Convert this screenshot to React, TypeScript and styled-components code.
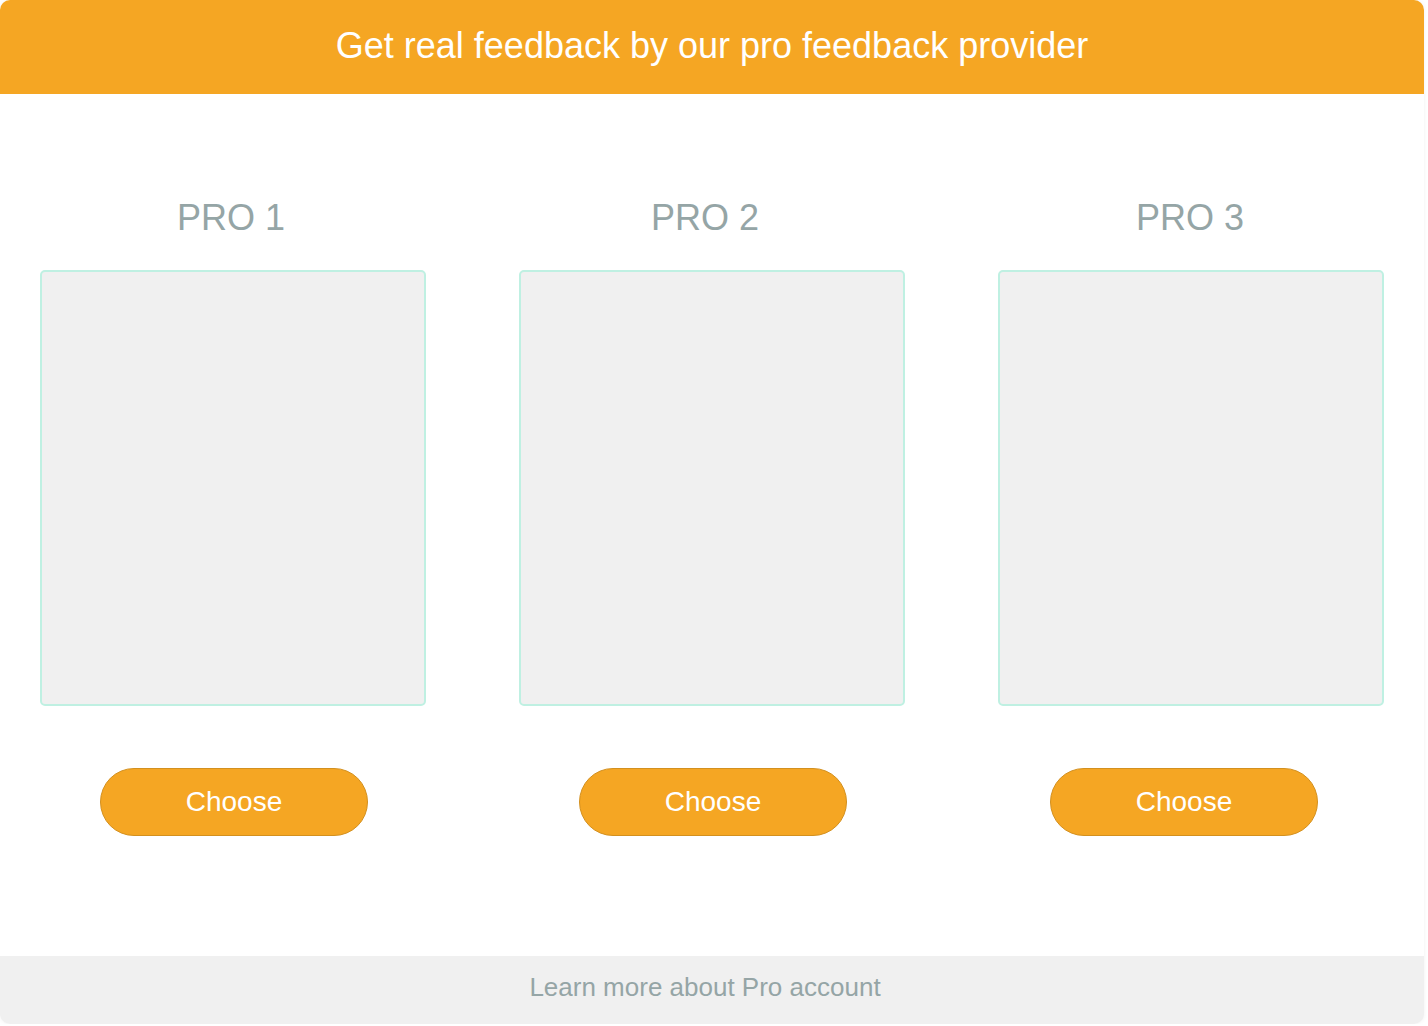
import styled, { createGlobalStyle } from 'styled-components';

const GlobalStyle = createGlobalStyle`
  html, body {
    margin: 0;
    padding: 0;
    background: #ffffff;
  }
  body {
    font-family: "Liberation Sans", Arial, Helvetica, sans-serif;
  }
`;

// shift values nudge title / button off the column centre, as in the design
const pros = [
    { name: 'PRO 1', titleShift: -2, buttonShift: 1 },
    { name: 'PRO 2', titleShift: -7, buttonShift: 1 },
    { name: 'PRO 3', titleShift: -1, buttonShift: -7 },
];

const App = () => {
    return (
        <>
            <GlobalStyle />
            <Panel>
                {/* Orange banner */}
                <Banner>Get real feedback by our pro feedback provider</Banner>

                {/* Three provider columns */}
                <Providers>
                    {pros.map((pro) => (
                        <Column key={pro.name}>
                            <Title $shift={pro.titleShift}>{pro.name}</Title>
                            <PhotoBox />
                            <ChooseButton type="button" $shift={pro.buttonShift}>Choose</ChooseButton>
                        </Column>
                    ))}
                </Providers>

                <Footer>
                    <FooterLink href="#">Learn more about Pro account</FooterLink>
                </Footer>
            </Panel>
        </>
    );
};

export default App;

const Panel = styled.div`
  width: 1424px;
  height: 1024px;
  display: flex;
  flex-direction: column;
  background: #ffffff;
  border-radius: 10px;
  overflow: hidden;
  box-shadow: 0 0 4px rgba(0, 0, 0, 0.06);
`;

const Banner = styled.div`
  height: 94px;
  line-height: 92px;
  background: #f5a623;
  color: #ffffff;
  font-size: 36px;
  text-align: center;
`;

const Providers = styled.div`
  display: grid;
  grid-template-columns: repeat(3, 386px);
  justify-content: space-between;
  padding: 106px 40px 0 40px;
`;

const Column = styled.div`
  display: flex;
  flex-direction: column;
  align-items: center;
`;

const Title = styled.h2<{ $shift: number }>`
  margin: 0 0 34px ${(p) => p.$shift * 2}px;
  font-size: 36px;
  line-height: 36px;
  font-weight: normal;
  color: #95a5a6;
`;

const PhotoBox = styled.div`
  box-sizing: border-box;
  width: 386px;
  height: 436px;
  background: #f0f0f0;
  border: 2px solid #bff0e2;
  border-radius: 5px;
`;

const ChooseButton = styled.button<{ $shift: number }>`
  box-sizing: border-box;
  width: 268px;
  height: 68px;
  margin: 62px 0 0 ${(p) => p.$shift * 2}px;
  background: #f5a623;
  border: 1px solid #d3901f;
  border-radius: 34px;
  color: #ffffff;
  font-family: "Liberation Sans", Arial, sans-serif;
  font-size: 28px;
  cursor: pointer;
`;

const Footer = styled.div`
  margin-top: auto;
  height: 68px;
  display: flex;
  align-items: center;
  justify-content: center;
  background: #f0f0f0;
`;

const FooterLink = styled.a`
  color: #95a5a6;
  font-size: 26px;
  text-decoration: none;
  margin: -6px 0 0 -14px;
`;
